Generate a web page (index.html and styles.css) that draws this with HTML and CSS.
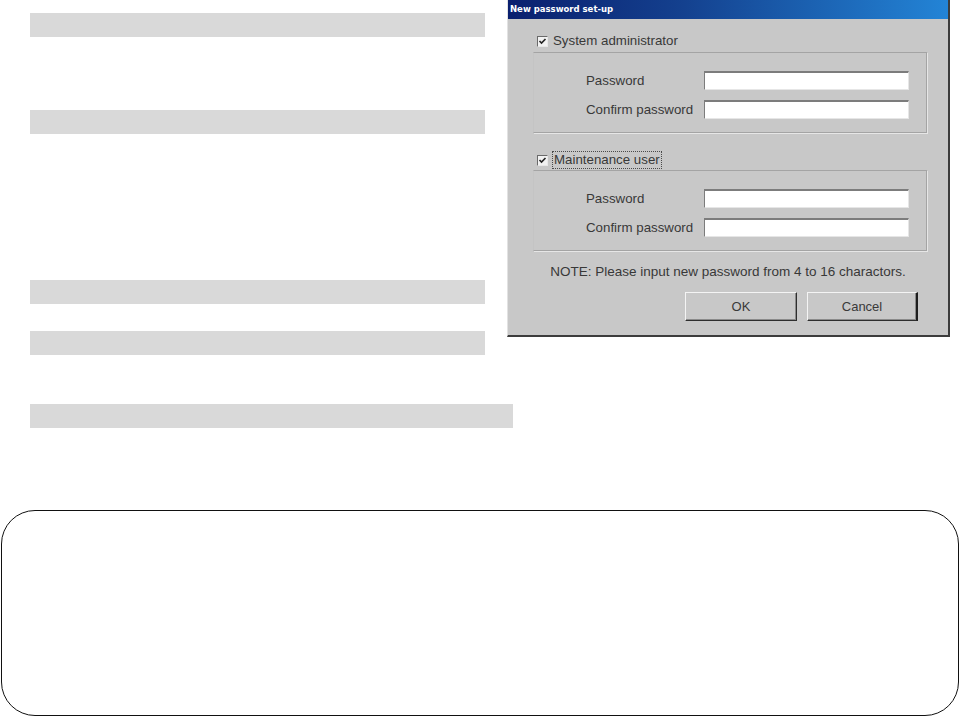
FILE: index.html
```html
<!DOCTYPE html>
<html>
<head>
<meta charset="UTF-8">
<title>New password set-up</title>
<link rel="stylesheet" href="styles.css">
</head>
<body>
	<div class="top">
		<div class="bars">
			<div class="bar first"></div>
			<div class="bar second"></div>
			<div class="bar third"></div>
			<div class="bar fourth"></div>
			<div class="bar wide"></div>
		</div>

		<div class="dialog">
			<div class="titlebar">New password set-up</div>

			<div class="checkRow first">
				<span class="checkbox">
					<svg width="9" height="9" viewBox="0 0 9 9"><path d="M1.5 4 L3.5 6 L7.5 2" fill="none" stroke="#222" stroke-width="1.6"/></svg>
				</span>
				<span class="checkLabel">System administrator</span>
			</div>
			<div class="group">
				<div class="fieldRow">
					<label>Password</label>
					<input type="password" class="field">
				</div>
				<div class="fieldRow">
					<label>Confirm password</label>
					<input type="password" class="field">
				</div>
			</div>

			<div class="checkRow second">
				<span class="checkbox">
					<svg width="9" height="9" viewBox="0 0 9 9"><path d="M1.5 4 L3.5 6 L7.5 2" fill="none" stroke="#222" stroke-width="1.6"/></svg>
				</span>
				<span class="checkLabel focused">Maintenance user</span>
			</div>
			<div class="group tight">
				<div class="fieldRow">
					<label>Password</label>
					<input type="password" class="field">
				</div>
				<div class="fieldRow">
					<label>Confirm password</label>
					<input type="password" class="field">
				</div>
			</div>

			<div class="note">NOTE: Please input new password from 4 to 16 charactors.</div>

			<div class="buttons">
				<button class="winButton ok">OK</button>
				<button class="winButton cancel">Cancel</button>
			</div>
		</div>
	</div>

	<div class="noteBox"></div>
</body>
</html>
```

FILE: styles.css
```css
body {
	margin: 0px;
	background: #ffffff;
	font-family: "Liberation Sans", Arial, sans-serif;
}

.top {
	display: flex;
	align-items: flex-start;
}

/* grey placeholder bars on the left */
.bars {
	width: 477px;
	padding-left: 30px;
	padding-top: 13px;
}

.bar {
	width: 455px;
	height: 24px;
	background: #d9d9d9;
}

.bar.second {
	margin-top: 73px;
}

.bar.third {
	margin-top: 146px;
}

.bar.fourth {
	margin-top: 27px;
}

.bar.wide {
	margin-top: 49px;
	width: 483px;
}

/* dialog window */
.dialog {
	width: 443px;
	height: 337px;
	box-sizing: border-box;
	background: #c8c8c8;
	border-left: 1px solid #e2e2e2;
	border-right: 2px solid #3c3c3c;
	border-bottom: 2px solid #3c3c3c;
	color: #383838;
	font-size: 13px;
}

.titlebar {
	height: 19px;
	line-height: 19px;
	padding-left: 2px;
	background: linear-gradient(to right, #0a1f6e 0%, #14418f 40%, #2384d6 100%);
	color: #ffffff;
	font-family: "DejaVu Sans", sans-serif;
	font-weight: bold;
	font-size: 8.5px;
}

.checkRow {
	display: flex;
	align-items: center;
	height: 16px;
	margin-left: 29px;
	gap: 5px;
}

.checkRow.first {
	margin-top: 14px;
}

.checkRow.second {
	margin-top: 19px;
}

.checkbox {
	width: 9px;
	height: 9px;
	background: #f2f2f2;
	border-top: 1px solid #6a6a6a;
	border-left: 1px solid #6a6a6a;
	border-right: 1px solid #e8e8e8;
	border-bottom: 1px solid #e8e8e8;
	display: flex;
}

.checkLabel {
	line-height: 16px;
	font-size: 13.3px;
}

.checkLabel.focused {
	outline: 1px dotted #4a4a4a;
	padding: 0px 1px;
}

.group {
	width: 394px;
	box-sizing: border-box;
	margin-left: 25px;
	margin-top: 3px;
	padding: 18px 15px 13px 52px;
	border: 1px solid #a4a4a4;
	border-left-color: #c4c4c4;
	box-shadow: 1px 1px 0px #e6e6e6;
	display: flex;
	flex-direction: column;
	gap: 10px;
}

.group.tight {
	margin-top: 2px;
}

.fieldRow {
	display: flex;
	align-items: center;
}

.fieldRow label {
	width: 118px;
	line-height: 16px;
	font-size: 13.3px;
}

.field {
	width: 205px;
	height: 19px;
	box-sizing: border-box;
	margin: 0px;
	padding: 0px;
	background: #ffffff;
	border-top: 2px solid #7c7c7c;
	border-left: 1px solid #7c7c7c;
	border-right: 1px solid #e6e6e6;
	border-bottom: 1px solid #e6e6e6;
}

.note {
	margin-top: 13px;
	line-height: 16px;
	text-align: center;
	font-size: 13.5px;
}

.buttons {
	display: flex;
	justify-content: flex-end;
	gap: 10px;
	margin-top: 12px;
	padding-right: 30px;
}

.winButton {
	height: 29px;
	box-sizing: border-box;
	background: #c8c8c8;
	border-top: 1px solid #f4f4f4;
	border-left: 1px solid #f4f4f4;
	border-right: 1px solid #2e2e2e;
	border-bottom: 1px solid #2e2e2e;
	box-shadow: inset -1px -1px 0px #8a8a8a;
	font-family: "Liberation Sans", Arial, sans-serif;
	font-size: 13px;
	color: #3a3a3a;
}

.winButton.ok {
	width: 112px;
}

.winButton.cancel {
	width: 111px;
	border-right: 2px solid #1e1e1e;
}

/* empty rounded frame at the bottom */
.noteBox {
	margin: 82px 0px 0px 1px;
	width: 958px;
	height: 206px;
	box-sizing: border-box;
	border: 1.5px solid #111111;
	border-radius: 34px;
}
```
